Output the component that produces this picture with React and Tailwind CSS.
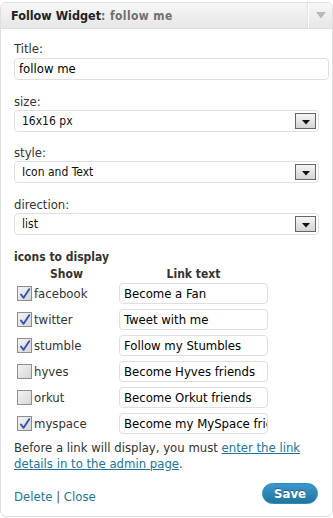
import React from "react";

const font = { fontFamily: '"DejaVu Sans Condensed", "DejaVu Sans", sans-serif' };

function Check({ checked }) {
  return (
    <span className="relative flex h-[15px] w-[15px] shrink-0 items-center justify-center border border-[#8e8e8e] bg-gradient-to-br from-[#f4f4f4] to-[#d6d6d6]">
      {checked && (
        <svg width="12" height="12" viewBox="0 0 12 12">
          <path d="M2 6.5 L4.6 9.8 L10.2 1.2" stroke="#3a56b0" strokeWidth="2" fill="none" strokeLinecap="round" strokeLinejoin="round" />
        </svg>
      )}
    </span>
  );
}

function Select({ value }) {
  return (
    <div className="flex h-[22px] w-[305px] items-center justify-between rounded-[4px] border border-[#dfdfdf] bg-white pl-[7px] pr-[2px] text-[12px] text-[#111]">
      <span>{value}</span>
      <span className="flex h-[16px] w-[21px] items-center justify-center border border-[#666] bg-gradient-to-b from-[#f6f6f6] to-[#d4d4d4]">
        <svg width="8" height="5" viewBox="0 0 8 5" className="mt-[3px]">
          <path d="M0 0 H8 L4 4.5 Z" fill="#111" />
        </svg>
      </span>
    </div>
  );
}

const rows = [
  ["facebook", true, "Become a Fan"],
  ["twitter", true, "Tweet with me"],
  ["stumble", true, "Follow my Stumbles"],
  ["hyves", false, "Become Hyves friends"],
  ["orkut", false, "Become Orkut friends"],
  ["myspace", true, "Become my MySpace friends"],
];

export default function App() {
  return (
    <div className="h-[518px] w-[333px] overflow-hidden bg-white pt-[2px] text-[13px] text-[#333]" style={font}>
      <div className="h-[515px] w-[333px] overflow-hidden rounded-[6px] border border-[#dfdfdf] bg-white">
        <div className="flex h-[26px] items-center border-b border-[#dfdfdf] bg-gradient-to-b from-[#f7f7f7] to-[#e6e6e6]">
          <div className="flex-1 pl-[10px] font-bold leading-none">
            <span className="text-[12.5px] text-[#222]">Follow Widget</span>
            <span className="text-[12px] tracking-[0.4px] text-[#707070]">: follow me</span>
          </div>
          <div className="flex h-full w-[24px] items-center justify-center border-l border-white shadow-[-1px_0_0_#e3e3e3]">
            <svg width="10" height="7" viewBox="0 0 10 7">
              <path d="M0 0 H10 L5 6.5 Z" fill="#b8b8b8" />
            </svg>
          </div>
        </div>

        <div className="pl-[13px] pr-[3px] pt-[12px]">
          <div className="h-[16px] leading-[16px]">Title:</div>
          <div className="mt-[1px] flex h-[22px] w-[315px] items-center rounded-[4px] border border-[#dfdfdf] pl-[4px] text-[13px] text-black">
            follow me
          </div>

          <div className="mt-[14px] h-[16px] leading-[16px]">size:</div>
          <Select value="16x16 px" />
          <div className="mt-[13px] h-[16px] leading-[16px]">style:</div>
          <Select value="Icon and Text" />
          <div className="mt-[14px] h-[16px] leading-[16px]">direction:</div>
          <Select value="list" />

          <div className="mt-[14px] h-[16px] font-bold leading-[16px] text-[12px]">icons to display</div>
          <div className="flex h-[18px] items-center text-[12px] font-bold">
            <div className="w-[105px] text-center">Show</div>
            <div className="w-[149px] text-center">Link text</div>
          </div>
          <div className="flex flex-col gap-[5px]">
            {rows.map(([name, checked, text]) => (
              <div key={name} className="flex h-[21px] items-center">
                <div className="flex w-[105px] items-center pl-[3px]">
                  <Check checked={checked} />
                  <span className="ml-[2px] text-[13px]">{name}</span>
                </div>
                <div className="flex h-[21px] w-[149px] items-center overflow-hidden whitespace-nowrap rounded-[4px] border border-[#dfdfdf] pl-[4px] text-[13px] text-black">
                  {text}
                </div>
              </div>
            ))}
          </div>

          <p className="mt-[6px] leading-[16px]">
            Before a link will display, you must{" "}
            <a className="text-[#21759b] underline">enter the link details in to the admin page</a>.
          </p>

          <div className="mt-[8px] flex items-center justify-between pr-[11px]">
            <div className="pt-[7px] text-[13px]">
              <a className="text-[#21759b]">Delete</a>
              <span className="text-[#555]"> | </span>
              <a className="text-[#21759b]">Close</a>
            </div>
            <button className="flex h-[21px] w-[56px] items-center justify-center rounded-full border border-[#298cba] bg-gradient-to-b from-[#3c97ce] to-[#21759b] text-[13px] font-bold text-white [text-shadow:0_-1px_0_rgba(0,0,0,0.3)]">
              Save
            </button>
          </div>
        </div>
      </div>
    </div>
  );
}
